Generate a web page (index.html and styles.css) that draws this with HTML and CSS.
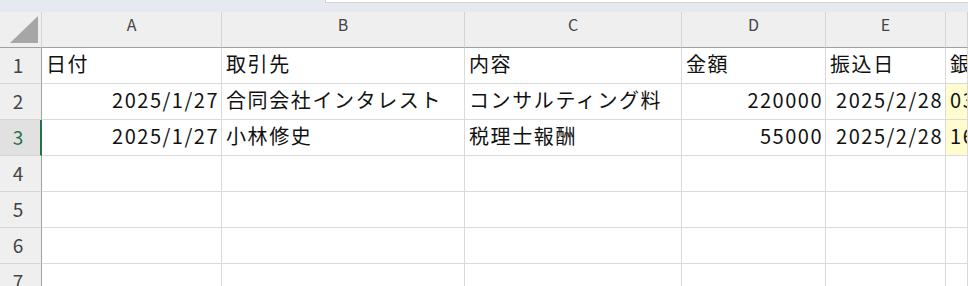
FILE: index.html
```html
<!DOCTYPE html>
<html lang="ja">
<head>
<meta charset="utf-8">
<title>Sheet1</title>
<link rel="stylesheet" href="styles.css">
</head>
<body>
<div class="ribbon-edge"><div class="formula-box"></div></div>
<div class="sheet">
  <div class="corner"><svg class="corner-mark" width="28" height="27" viewBox="0 0 28 27"><polygon points="0,27 28,0 28,27" fill="#a6a6a6"/></svg></div>
  <div class="colhead">A</div>
  <div class="colhead">B</div>
  <div class="colhead">C</div>
  <div class="colhead">D</div>
  <div class="colhead">E</div>
  <div class="colhead"></div>

  <div class="rowhead">1</div>
  <div class="cell">日付</div>
  <div class="cell">取引先</div>
  <div class="cell">内容</div>
  <div class="cell">金額</div>
  <div class="cell">振込日</div>
  <div class="cell">銀</div>

  <div class="rowhead">2</div>
  <div class="cell num">2025/1/27</div>
  <div class="cell">合同会社インタレスト</div>
  <div class="cell">コンサルティング料</div>
  <div class="cell num">220000</div>
  <div class="cell num">2025/2/28</div>
  <div class="cell note">03</div>

  <div class="rowhead selected">3</div>
  <div class="cell num">2025/1/27</div>
  <div class="cell">小林修史</div>
  <div class="cell">税理士報酬</div>
  <div class="cell num">55000</div>
  <div class="cell num">2025/2/28</div>
  <div class="cell note">16</div>

  <div class="rowhead">4</div>
  <div class="cell"></div><div class="cell"></div><div class="cell"></div><div class="cell"></div><div class="cell"></div><div class="cell"></div>
  <div class="rowhead">5</div>
  <div class="cell"></div><div class="cell"></div><div class="cell"></div><div class="cell"></div><div class="cell"></div><div class="cell"></div>
  <div class="rowhead">6</div>
  <div class="cell"></div><div class="cell"></div><div class="cell"></div><div class="cell"></div><div class="cell"></div><div class="cell"></div>
  <div class="rowhead">7</div>
  <div class="cell"></div><div class="cell"></div><div class="cell"></div><div class="cell"></div><div class="cell"></div><div class="cell"></div>
</div>
</body>
</html>
```
FILE: styles.css
```css
html, body {
  margin: 0;
  padding: 0;
  width: 968px;
  height: 286px;
  overflow: hidden;
  background: #ffffff;
  font-family: "Noto Sans CJK JP", "Noto Sans", sans-serif;
}

/* strip left over from the ribbon above the grid */
.ribbon-edge {
  height: 12px;
  background: #e6e9ef;
  display: flex;
}
.formula-box {
  margin-left: 325px;
  flex: 1;
  height: 2px;
  background: #ffffff;
  border-left: 1px solid #d0d3d8;
  border-bottom: 1px solid #d0d3d8;
}

.sheet {
  display: grid;
  grid-template-columns: 42px 180px 243px 217px 144px 120px 1fr;
  grid-auto-rows: 36px;
}

.sheet > div {
  box-sizing: border-box;
  white-space: nowrap;
  overflow: hidden;
}

.corner {
  background: #efefef;
  border-bottom: 1px solid #a0a0a0;
  border-right: 1px solid #d4d4d4;
  padding: 4px 0 0 10px;
}
.corner-mark { display: block; }

.colhead {
  background: #efefef;
  border-right: 1px solid #d4d4d4;
  border-bottom: 1px solid #a0a0a0;
  color: #444444;
  font-size: 16px;
  line-height: 24px;
  text-align: center;
}

.rowhead {
  background: #efefef;
  border-right: 1px solid #a0a0a0;
  border-bottom: 1px solid #d4d4d4;
  color: #444444;
  font-size: 19px;
  line-height: 33px;
  text-align: center;
  padding-right: 5px;
}
.rowhead.selected {
  background: #e1e1e1;
  color: #217346;
  border-right: 2px solid #217346;
  padding-right: 4px;
}

.cell {
  border-right: 1px solid #dadada;
  border-bottom: 1px solid #dadada;
  color: #111111;
  font-size: 20px;
  line-height: 31px;
  letter-spacing: 1.6px;
  padding: 0 3px 0 4px;
}
.cell.num {
  text-align: right;
  letter-spacing: 1.5px;
  padding-right: 2px;
}
.cell.note {
  background: #fffdd0;
}
```
